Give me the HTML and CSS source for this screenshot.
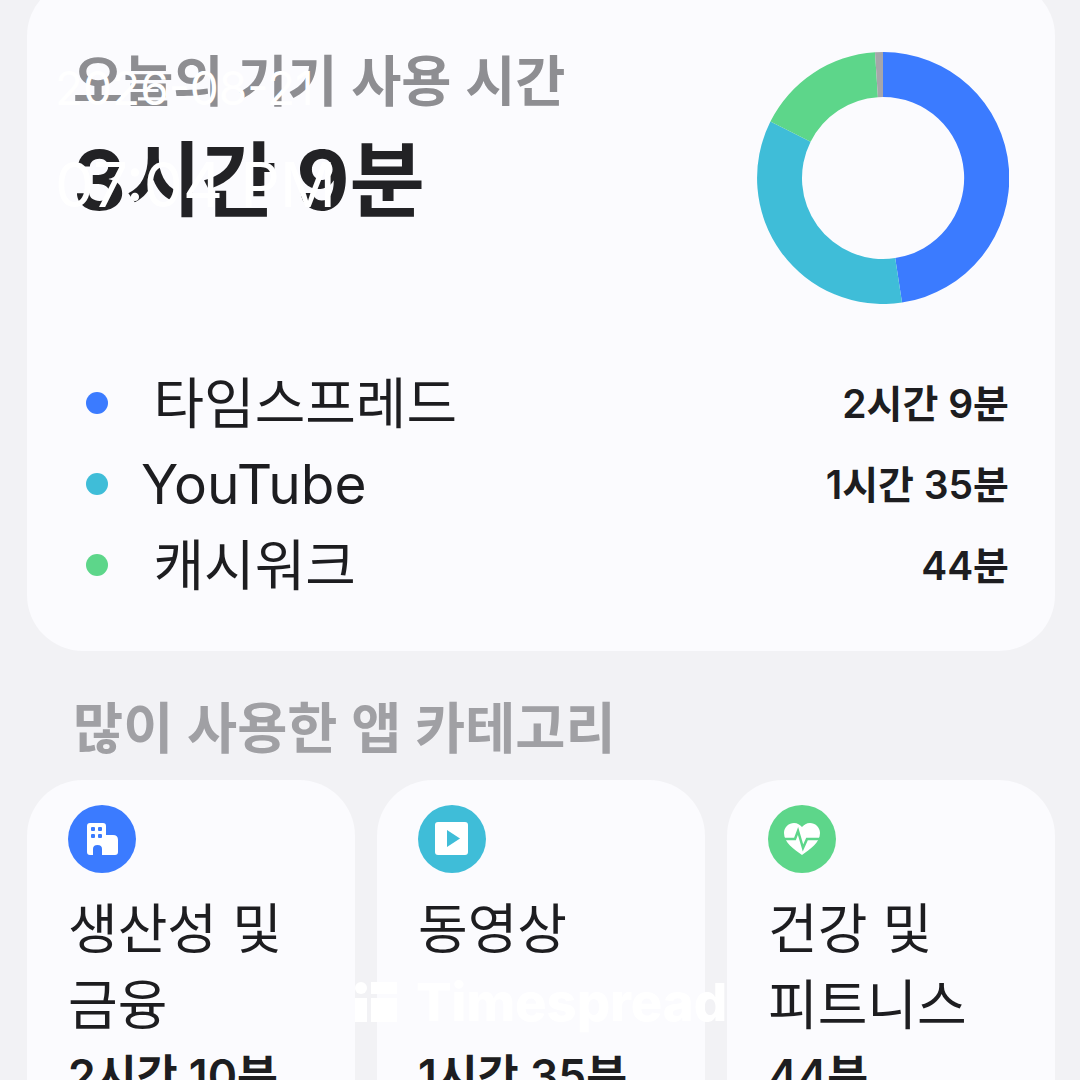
FILE: index.html
```html
<!DOCTYPE html>
<html lang="ko">
<head>
	<meta charset="UTF-8">
	<title>기기 사용 시간</title>
	<link rel="stylesheet" href="styles.css">
</head>
<body>
<div class="page">
	<section class="summary">
		<div class="summary-top">
			<div class="summary-text">
				<h2 class="summary-title">오늘의 기기 사용 시간</h2>
				<p class="summary-total">3시간 9분</p>
			</div>
			<svg class="donut" width="252" height="252" viewBox="0 0 252 252">
				<path fill="#3b7bff" d="M126 0A126 126 0 0 1 145 250.6L138.2 206.1A81 81 0 0 0 126 45Z"/>
				<path fill="#3fbdd8" d="M145 250.6A126 126 0 0 1 13.4 69.6L53.6 89.7A81 81 0 0 0 138.2 206.1Z"/>
				<path fill="#5dd68a" d="M13.4 69.6A126 126 0 0 1 118 .3L120.9 45.2A81 81 0 0 0 53.6 89.7Z"/>
				<path fill="#a6a6aa" d="M118 .3A126 126 0 0 1 126 0V45A81 81 0 0 0 120.9 45.2Z"/>
			</svg>
		</div>
		<ul class="legend">
			<li class="legend-row"><span class="dot dot-blue"></span><span class="legend-name"> 타임스프레드</span><b class="legend-time">2시간 9분</b></li>
			<li class="legend-row"><span class="dot dot-cyan"></span><span class="legend-name">YouTube</span><b class="legend-time">1시간 35분</b></li>
			<li class="legend-row"><span class="dot dot-green"></span><span class="legend-name"> 캐시워크</span><b class="legend-time">44분</b></li>
		</ul>
	</section>

	<h2 class="section-title">많이 사용한 앱 카테고리</h2>

	<div class="cats">
		<div class="cat">
			<span class="cat-icon dot-blue">
				<svg width="40" height="40" viewBox="0 0 40 40"><path fill="#fff" d="M5 7Q5 4 8 4H21Q24 4 24 7V16H31Q36 16 36 21V33Q36 36 33 36H20V30Q20 26 15.500 26 11 26 11 30V36H8Q5 36 5 33Z"/><g fill="#3b7bff"><rect x="9" y="8" width="4" height="4" rx="1"/><rect x="16" y="8" width="4" height="4" rx="1"/><rect x="9" y="15" width="4" height="4" rx="1"/><rect x="16" y="15" width="4" height="4" rx="1"/></g></svg>
			</span>
			<p class="cat-name">생산성 및<br>금융</p>
			<p class="cat-time">2시간 10분</p>
		</div>
		<div class="cat">
			<span class="cat-icon dot-cyan">
				<svg width="40" height="40" viewBox="0 0 40 40"><rect x="3" y="3" width="33" height="33" rx="3" fill="#fff"/><path fill="#3fbdd8" d="M15 11L28 19.500 15 28Z"/></svg>
			</span>
			<p class="cat-name">동영상<br>&nbsp;</p>
			<p class="cat-time">1시간 35분</p>
		</div>
		<div class="cat">
			<span class="cat-icon dot-green">
				<svg width="40" height="40" viewBox="0 0 40 40"><path fill="#fff" d="M20 36C12 30 2 24 2 14 2 8 7 4 12 4 15.500 4 18 6 20 8 22 6 24.500 4 28 4 33 4 38 8 38 14 38 24 28 30 20 36Z"/><path fill="none" stroke="#5dd68a" stroke-width="2.500" d="M1 20H13L16 12 21 29 25 20H39"/></svg>
			</span>
			<p class="cat-name">건강 및<br>피트니스</p>
			<p class="cat-time">44분</p>
		</div>
	</div>

	<div class="stamp">
		<p class="stamp-date">2026-08-21</p>
		<p class="stamp-clock">07:04 PM</p>
	</div>
	<div class="mark">
		<svg width="42" height="42" viewBox="0 0 42 42"><circle cx="6" cy="7" r="6" fill="#fff"/><rect x="0" y="17" width="12" height="24" fill="#fff"/><rect x="16" y="1" width="26" height="12" fill="#fff"/><rect x="16" y="17" width="26" height="24" fill="#fff"/></svg>
		<span>Timespread</span>
	</div>
</div>
</body>
</html>
```

FILE: styles.css
```css
*{padding:0; margin:0; list-style:none; box-sizing:border-box;}
html,body{height:1080px; overflow:hidden;}
body{background:#f2f2f5; font-family:Inter,"Noto Sans CJK KR",sans-serif; color:#1d1d20;}
.page{position:relative; height:1080px; padding:0 25px 0 27px; overflow:hidden;}

.summary{background:#fbfbfe; border-radius:56px; height:671px; margin-top:-20px; padding:72px 46px 0 48px;}
.summary-top{display:flex; justify-content:space-between; align-items:flex-start; height:252px;}
.summary-text{margin-left:-2px;}
.summary-title{font-size:54.5px; line-height:70px; font-weight:600; color:#8e8e92; margin-top:-6px;}
.summary-total{font-size:82px; line-height:100px; font-weight:700; color:#222225; margin-top:15px;}

.legend{margin-top:58px;}
.legend-row{display:flex; align-items:center; height:81px;}
.dot{display:block; border-radius:50%;}
.legend-row .dot{width:22px; height:22px; margin:0 33px 0 11px;}
.dot-blue{background:#3b7bff;}
.dot-cyan{background:#3fbdd8;}
.dot-green{background:#5dd68a;}
.legend-name{font-size:55px; line-height:70px; white-space:pre; word-spacing:-3px; flex:1;}
.legend-time{font-size:39px; font-weight:600; position:relative; top:-2px;}

.section-title{font-size:54.5px; line-height:70px; font-weight:600; color:#a0a0a4; margin:42px 0 0 46px;}

.cats{display:flex; gap:22px; margin-top:17px;}
.cat{flex:1; height:400px; background:#fbfbfe; border-radius:56px; padding:25px 41px 0;}
.cat-icon{display:flex; align-items:center; justify-content:center; width:68px; height:68px; border-radius:50%;}
.cat-name{font-size:54px; line-height:76px; margin-top:19px;}
.cat-time{font-size:44.5px; line-height:50px; font-weight:600; margin-top:7px;}

.stamp{position:absolute; left:55px; top:58px; color:#fff;}
.stamp-date{font-size:46px; line-height:60px; font-weight:400;}
.stamp-clock{font-size:62px; line-height:80px; font-weight:400; margin-top:27px;}
.mark{position:absolute; left:355px; top:972px; display:flex; align-items:center; gap:19px; color:#fff; font-size:52.5px; line-height:60px; font-weight:800;}
```
